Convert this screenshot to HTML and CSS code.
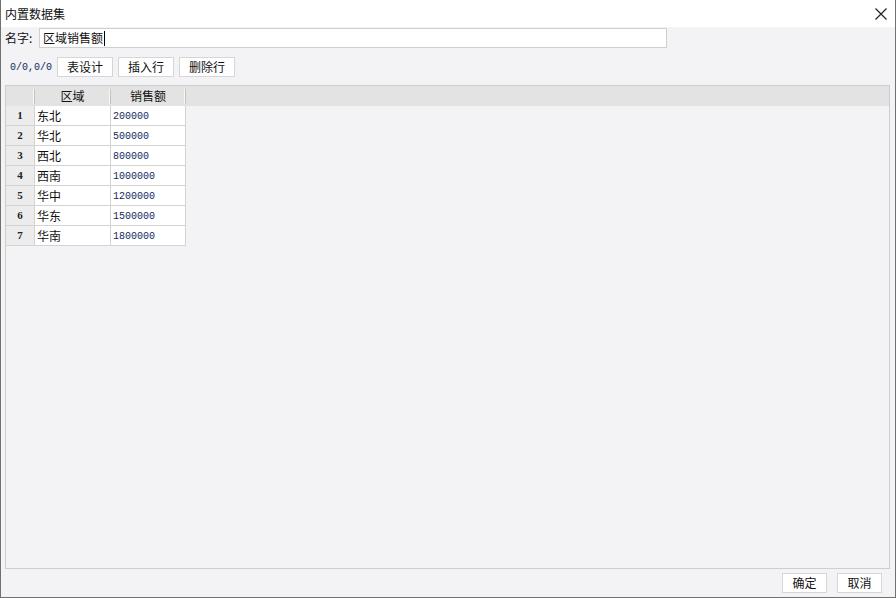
FILE: index.html
```html
<!DOCTYPE html>
<html lang="zh-CN">
    <head>
        <meta charset="UTF-8"/>
        <title>内置数据集</title>
        <link rel="stylesheet" href="styles.css">
    </head>
    <body>
        <div class="dialog">
          <header class="titlebar">
            <span class="title">内置数据集</span>
            <button class="close" title="关闭">
              <svg width="12" height="12" viewBox="0 0 12 12"><path d="M0.5 0.5 L11.5 11.5 M11.5 0.5 L0.5 11.5" stroke="#222" stroke-width="1.2" fill="none"/></svg>
            </button>
          </header>
          <main class="body">
            <div class="name-row">
              <label for="name">名字:</label>
              <div class="name-input" id="name">区域销售额<span class="caret"></span></div>
            </div>
            <div class="toolbar">
              <span class="pos">0/0,0/0</span>
              <button class="btn">表设计</button>
              <button class="btn">插入行</button>
              <button class="btn">删除行</button>
            </div>
            <div class="grid">
              <div class="sheet">
                <div class="hd"></div><div class="hd">区域</div><div class="hd">销售额</div>

                <div class="rn">1</div><div class="cell">东北</div><div class="cell num">200000</div>
                <div class="rn">2</div><div class="cell">华北</div><div class="cell num">500000</div>
                <div class="rn">3</div><div class="cell">西北</div><div class="cell num">800000</div>
                <div class="rn">4</div><div class="cell">西南</div><div class="cell num">1000000</div>
                <div class="rn">5</div><div class="cell">华中</div><div class="cell num">1200000</div>
                <div class="rn">6</div><div class="cell">华东</div><div class="cell num">1500000</div>
                <div class="rn">7</div><div class="cell">华南</div><div class="cell num">1800000</div>
              </div>
            </div>
            <div class="actions">
              <button class="btn ok">确定</button>
              <button class="btn">取消</button>
            </div>
          </main>
        </div>
    </body>
</html>
```

FILE: styles.css
```css
html, body {
  margin: 0;
  padding: 0;
}

body {
  font-family: "Noto Sans CJK SC", "Noto Sans", sans-serif;
  font-size: 12px;
  color: #111;
  background: #f3f3f5;
}

.dialog {
  width: 896px;
  height: 598px;
  box-sizing: border-box;
  border: 1px solid #707070;
  border-top: 0;
  display: flex;
  flex-direction: column;
  background: #f3f3f5;
}

.titlebar {
  height: 27px;
  background: #fff;
  display: flex;
  align-items: center;
  justify-content: space-between;
  padding: 0 8px 0 4px;
  flex: none;
}
.title {
  font-size: 12px;
  line-height: 27px;
}
.close {
  border: 0;
  background: transparent;
  padding: 0;
  width: 12px;
  height: 12px;
  display: flex;
}

.body {
  flex: 1;
  display: flex;
  flex-direction: column;
  padding: 1px 4px 0 4px;
}

.name-row {
  display: flex;
  align-items: center;
  height: 20px;
}
.name-row label {
  width: 34px;
  line-height: 20px;
}
.name-input {
  width: 628px;
  height: 20px;
  box-sizing: border-box;
  border: 1px solid #cfcfcf;
  background: #fff;
  padding: 0 3px;
  line-height: 18px;
  display: flex;
  align-items: center;
}
.caret {
  display: inline-block;
  width: 1px;
  height: 15px;
  background: #000;
  margin-left: 1px;
}

.toolbar {
  display: flex;
  align-items: center;
  gap: 5px;
  margin-top: 9px;
  height: 20px;
}
.pos {
  font-family: "Liberation Mono", monospace;
  font-size: 10px;
  color: #0f2a62;
  width: 42px;
  padding-left: 5px;
}

.btn {
  width: 56px;
  height: 20px;
  box-sizing: border-box;
  border: 1px solid #d6d6d6;
  background: #fff;
  font-family: "Noto Sans CJK SC", "Noto Sans", sans-serif;
  font-size: 12px;
  color: #111;
  padding: 0;
  line-height: 18px;
}

.grid {
  margin-top: 8px;
  margin-right: 1px;
  height: 484px;
  box-sizing: border-box;
  border: 1px solid #cdcdcd;
  background: #f3f3f5;
  position: relative;
}
.grid::before {
  content: "";
  position: absolute;
  left: 0;
  right: 0;
  top: 0;
  height: 20px;
  background: #e3e3e3;
}

.sheet {
  position: relative;
  display: grid;
  grid-template-columns: 29px 76px 75px;
  grid-auto-rows: 20px;
  width: 180px;
}
.sheet > div {
  box-sizing: border-box;
  white-space: nowrap;
  overflow: hidden;
}

.hd {
  background: #e3e3e3;
  text-align: center;
  line-height: 20px;
  position: relative;
  padding-right: 1px;
}
.hd::after {
  content: "";
  position: absolute;
  right: 0;
  top: 3px;
  bottom: 2px;
  width: 1px;
  background: #c8c2b4;
  box-shadow: -1px 0 0 #f7f7f7;
}

.rn, .cell {
  border-right: 1px solid #d3d3d3;
  border-bottom: 1px solid #d3d3d3;
  line-height: 19px;
}
.rn {
  background: #ececec;
  text-align: center;
  font-family: "Liberation Serif", serif;
  font-weight: bold;
  font-size: 11px;
  color: #222;
}
.cell {
  background: #fff;
  padding-left: 2px;
}
.cell.num {
  font-family: "Liberation Mono", monospace;
  font-size: 10px;
  color: #0f2a62;
  padding-top: 2px;
  line-height: 17px;
}

.actions {
  display: flex;
  justify-content: flex-end;
  gap: 10px;
  margin-top: 4px;
  padding-right: 9px;
}
.actions .btn {
  width: 45px;
}
```
